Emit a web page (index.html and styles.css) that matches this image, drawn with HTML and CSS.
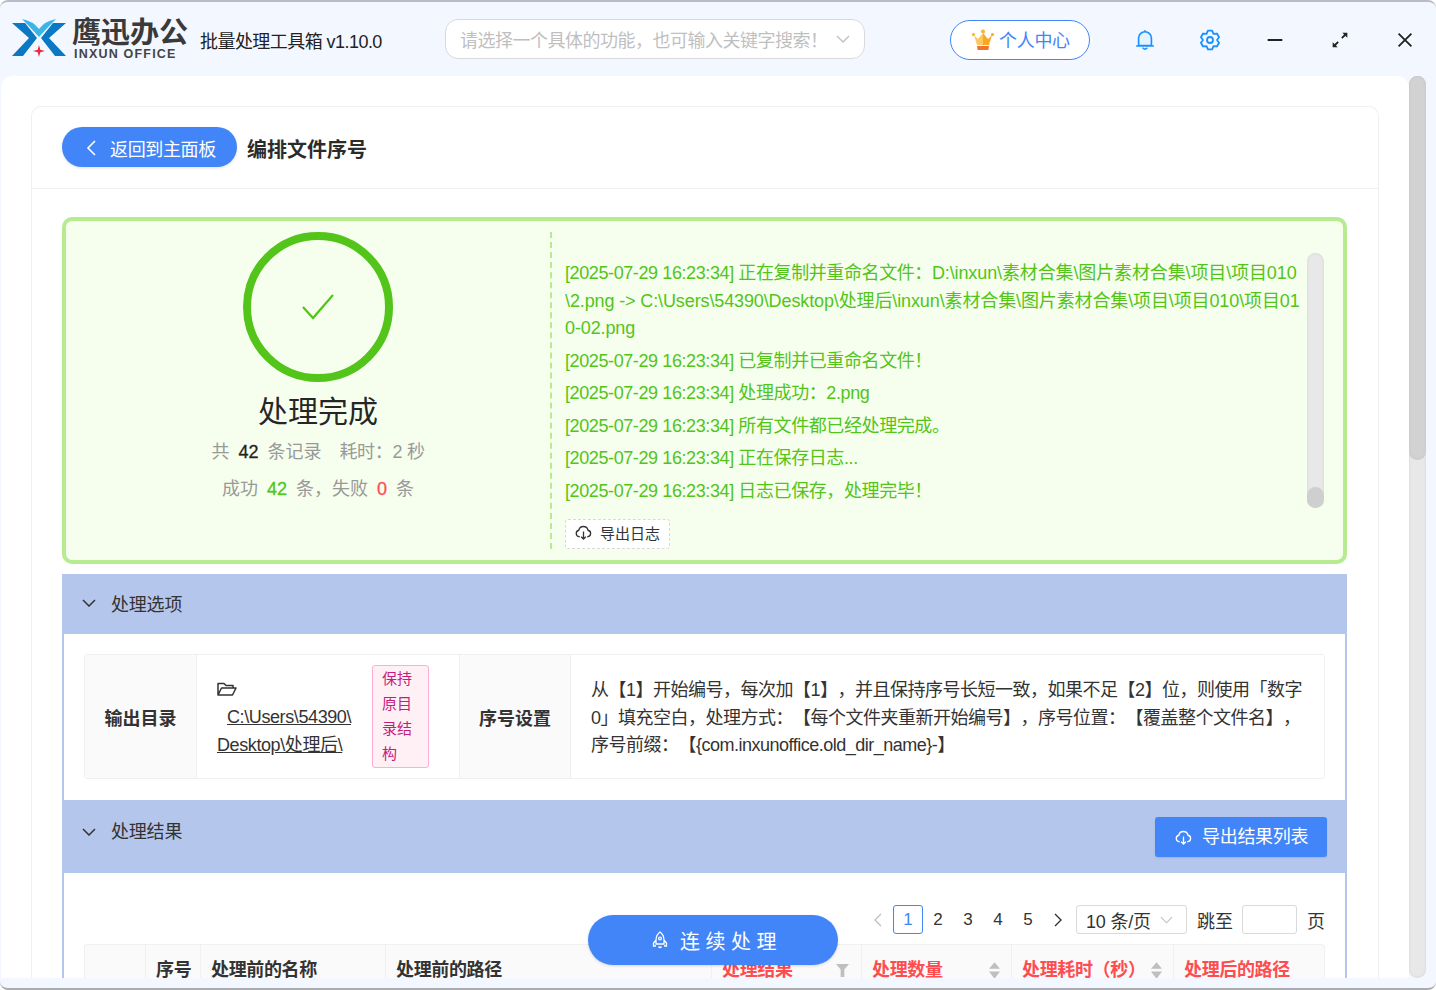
FILE: index.html
```html
<!DOCTYPE html>
<html lang="zh-CN">
<head>
<meta charset="utf-8">
<title>批量处理工具箱</title>
<link rel="stylesheet" href="styles.css">
</head>
<body>
<div class="app">
  <header class="topbar">
    <div class="logo">
      <svg class="logo-mark" viewBox="12 19 55 39">
        <path fill="#0a78c2" d="M12 24H25L37 39 23 57H12L29 39Z"/>
        <path fill="#0a78c2" d="M66 24H53L41 39 55 57H66L49 39Z"/>
        <path fill="#3cb4e8" d="M22 20Q33 22 39 30 45 22 56 20 47 29 39 38 31 29 22 20Z"/>
        <path fill="#ee2b3b" d="M39 46L40.3 50.7 45 52 40.3 53.3 39 58 37.7 53.3 33 52 37.7 50.7Z"/>
      </svg>
      <div class="logo-text">
        <div class="logo-cn">鹰迅办公</div>
        <div class="logo-en">INXUN OFFICE</div>
      </div>
    </div>
    <div class="app-title">批量处理工具箱 v1.10.0</div>
    <div class="search">
      <span class="search-text">请选择一个具体的功能，也可输入关键字搜索！</span>
      <svg class="search-arrow" viewBox="0 0 14 8"><path d="M1 1L7 7 13 1"/></svg>
    </div>
    <div class="user-btn">
      <svg class="crown" viewBox="971 31 24 22">
        <circle cx="983" cy="33.5" r="2" fill="#f9b233"/>
        <circle cx="973.5" cy="36.5" r="1.6" fill="#f9b233"/>
        <circle cx="992.5" cy="36.5" r="1.6" fill="#f9a825"/>
        <path fill="#fdc860" d="M974 37L977 47H983V35L978 41Z"/>
        <path fill="#f9a825" d="M992 37L989 47H983V35L988 41Z"/>
        <path fill="#f2742c" d="M977 48H989L988.4 52H977.6Z"/>
      </svg>
      <span class="user-name">个人中心</span>
    </div>
    <div class="win-icons">
      <svg class="win-icon" viewBox="0 0 20 24"><path class="bell" d="M3 18V10A7 7 0 0 1 17 10V18ZM1 18.500H19M8 21Q10 23 12 21M10 2V3"/></svg>
      <svg class="win-icon" viewBox="-11 -11 22 22"><path class="gear" d="M-2.100-9.300L2.100-9.300 3.500-6.060 6.950-6.480 9.080-2.780 7 0 9.080 2.780 6.950 6.480 3.500 6.060 2.100 9.300-2.100 9.300-3.500 6.060-6.950 6.480-9.080 2.780-7 0-9.080-2.780-6.950-6.480-3.500-6.060Z"/><circle class="gear" r="3"/></svg>
      <svg class="win-icon" viewBox="0 0 24 24"><path class="win-line" d="M4 12H20"/></svg>
      <svg class="win-icon" viewBox="0 0 24 24"><path class="win-line" d="M14 10L18 6M10 14L6 18"/><path class="win-fill" d="M14.500 4H20V9.500ZM9.500 20H4V14.500Z"/></svg>
      <svg class="win-icon" viewBox="0 0 24 24"><path class="win-line" d="M5 5L19 19M19 5L5 19"/></svg>
    </div>
  </header>

  <div class="workspace">
    <main class="panel">
      <section class="card">
        <div class="card-head">
          <div class="back-btn">
            <svg class="back-arrow" viewBox="0 0 10 16"><path d="M9 1L2 8 9 15"/></svg>
            <span>返回到主面板</span>
          </div>
          <h1 class="page-title">编排文件序号</h1>
        </div>
        <div class="card-body">
          <div class="result-box">
            <div class="summary">
              <div class="ring">
                <svg class="tick" viewBox="0 0 32 26"><path d="M1 13L11 24 31 1"/></svg>
              </div>
              <div class="done">处理完成</div>
              <div class="stat stat-a">共<b class="num">42</b>条记录<span class="stat-gap">耗时：2 秒</span></div>
              <div class="stat">成功<b class="num ok">42</b>条，失败<b class="num bad">0</b>条</div>
            </div>
            <div class="log-side">
              <div class="log-row">
                <div class="log">
                  <p>[2025-07-29 16:23:34] 正在复制并重命名文件：<span class="log-path">D:\inxun\素材合集\图片素材合集\项目\项目010<br>\2.png -&gt; C:\Users\54390\Desktop\处理后\inxun\素材合集\图片素材合集\项目\项目010\项目01<br>0-02.png</span></p>
                  <p>[2025-07-29 16:23:34] 已复制并已重命名文件！</p>
                  <p>[2025-07-29 16:23:34] 处理成功：2.png</p>
                  <p>[2025-07-29 16:23:34] 所有文件都已经处理完成。</p>
                  <p>[2025-07-29 16:23:34] 正在保存日志...</p>
                  <p>[2025-07-29 16:23:34] 日志已保存，处理完毕！</p>
                </div>
                <div class="log-track"><div class="log-thumb"></div></div>
              </div>
              <div class="log-export">
                <svg class="cloud" viewBox="0 0 18 16"><path d="M5 12.500H4.500A3.500 3.500 0 0 1 4 5.600 5 5 0 0 1 13.800 5.600 3.500 3.500 0 0 1 13.500 12.500H13M9 7V15M6.500 12.500L9 15 11.500 12.500"/></svg>
                <span>导出日志</span>
              </div>
            </div>
          </div>

          <div class="fold-head">
            <svg class="fold-arrow" viewBox="0 0 14 8"><path d="M1 1L7 7 13 1"/></svg>
            <span>处理选项</span>
          </div>
          <div class="fold-body options">
            <div class="opt-table">
              <div class="opt-label">输出目录</div>
              <div class="opt-path">
                <div class="path-text">
                  <svg class="folder" viewBox="0 0 20 14"><path d="M1 13V1.500H7L9 3.500H16V6M1 13L4.500 6H19L15.500 13Z"/></svg>
                  <div class="path-link"><a>C:\Users\54390\<br>Desktop\处理后\</a></div>
                </div>
                <div class="tag">保持原目录结构</div>
              </div>
              <div class="opt-label">序号设置</div>
              <div class="opt-desc">从【1】开始编号，每次加【1】，并且保持序号长短一致，如果不足【2】位，则使用「数字<br>0」填充空白，处理方式：【每个文件夹重新开始编号】，序号位置：【覆盖整个文件名】，<br>序号前缀：【{com.inxunoffice.old_dir_name}-】</div>
            </div>
          </div>

          <div class="fold-head tall">
            <svg class="fold-arrow" viewBox="0 0 14 8"><path d="M1 1L7 7 13 1"/></svg>
            <span>处理结果</span>
            <div class="export-btn">
              <svg class="cloud white" viewBox="0 0 18 16"><path d="M5 12.500H4.500A3.500 3.500 0 0 1 4 5.600 5 5 0 0 1 13.800 5.600 3.500 3.500 0 0 1 13.500 12.500H13M9 7V15M6.500 12.500L9 15 11.500 12.500"/></svg>
              <span>导出结果列表</span>
            </div>
          </div>
          <div class="fold-body results">
            <div class="pager">
              <svg class="pg-arrow muted" viewBox="0 0 8 14"><path d="M7 1L1 7 7 13"/></svg>
              <span class="pg-item current">1</span>
              <span class="pg-item">2</span>
              <span class="pg-item">3</span>
              <span class="pg-item">4</span>
              <span class="pg-item">5</span>
              <svg class="pg-arrow" viewBox="0 0 8 14"><path d="M1 1L7 7 1 13"/></svg>
              <div class="pg-size"><span>10 条/页</span><svg class="pg-drop" viewBox="0 0 14 8"><path d="M1 1L7 7 13 1"/></svg></div>
              <span class="pg-jump">跳至</span>
              <span class="pg-input"></span>
              <span class="pg-unit">页</span>
            </div>
            <div class="thead">
              <div class="th c-check"></div>
              <div class="th c-no">序号</div>
              <div class="th c-name">处理前的名称</div>
              <div class="th c-path">处理前的路径</div>
              <div class="th c-res red">处理结果<svg class="filter" viewBox="0 0 14 14"><path d="M0 0H14L9 6V14H5V6Z"/></svg></div>
              <div class="th c-count red">处理数量<svg class="sorter" viewBox="0 0 12 18"><path d="M6 0L12 7H0ZM6 18L0 10H12Z"/></svg></div>
              <div class="th c-time red">处理耗时（秒）<svg class="sorter" viewBox="0 0 12 18"><path d="M6 0L12 7H0ZM6 18L0 10H12Z"/></svg></div>
              <div class="th c-after red">处理后的路径</div>
            </div>
          </div>
        </div>
      </section>
    </main>
    <div class="page-track"><div class="page-thumb"></div></div>
  </div>

  <div class="run-btn">
    <svg class="rocket" viewBox="0 0 16 18"><path d="M8 1Q12 4 12 9V13H4V9Q4 4 8 1ZM4 9L1.500 12V15H4M12 9L14.500 12V15H12M6.500 15.500Q8 17.500 9.500 15.500"/><circle cx="8" cy="7.500" r="1.400"/></svg>
    <span>连续处理</span>
  </div>
</div>
</body>
</html>
```

FILE: styles.css
```css
* { box-sizing: border-box; }
html, body { margin: 0; height: 100%; background: #fff; overflow: hidden; }
body {
  font-family: "Liberation Sans", "Noto Sans CJK SC", sans-serif;
  font-size: 18px;
  color: #333;
  text-spacing-trim: space-all;
}
svg { display: block; flex: none; }

.app {
  position: relative;
  height: 990px;
  background: #f3f7ff;
  border-top: 2px solid #b9bcc6;
  border-bottom: 2px solid #a9abaf;
  border-radius: 8px;
  overflow: hidden;
}

/* top bar */
.topbar { height: 74px; display: flex; align-items: center; padding: 2px 0 0 12px; }
.logo { width: 188px; display: flex; align-items: flex-start; margin-top: -2px; }
.logo-mark { width: 55px; height: 39px; }
.logo-text { margin-left: 5px; margin-top: 1px; }
.logo-cn { font-size: 29px; line-height: 29px; font-weight: 700; color: #3a3a3a; letter-spacing: 0; white-space: nowrap; }
.logo-en { font-size: 12.500px; line-height: 13px; font-weight: 700; color: #444; letter-spacing: 1.200px; margin-left: 2px; white-space: nowrap; }
.app-title { width: 245px; font-size: 18px; color: #222; letter-spacing: -.55px; white-space: nowrap; }
.search {
  width: 420px; height: 40px; margin-top: -2px; background: #fff; border: 1px solid #d9d9d9; border-radius: 13px;
  display: flex; align-items: center; padding: 0 14px; justify-content: space-between;
}
.search-text { color: #bfbfbf; letter-spacing: -.5px; white-space: nowrap; }
.search-arrow { width: 14px; height: 8px; }
.search-arrow path { fill: none; stroke: #bfbfbf; stroke-width: 1.300; }
.user-btn {
  margin-left: 85px; width: 140px; height: 40px; border: 1px solid #4285f8; border-radius: 20px; background: #fff;
  display: flex; align-items: center; padding-left: 20px; color: #4285f8; letter-spacing: -.3px; white-space: nowrap;
}
.user-name { margin: -2px 0 0 -1px; }
.crown { width: 24px; height: 22px; margin-right: 5px; }
.win-icons { margin-left: 44px; display: flex; align-items: center; }
.win-icon { width: 22px; height: 22px; margin-right: 43px; }
.win-icons .win-icon:last-child { margin-right: 0; }
.bell { fill: #e6f3ff; stroke: #1890ff; stroke-width: 1.800; stroke-linejoin: round; stroke-linecap: round; }
.gear { fill: none; stroke: #1890ff; stroke-width: 1.800; stroke-linejoin: round; }
.win-line { fill: none; stroke: #222; stroke-width: 2; }
.win-fill { fill: #222; }

/* workspace */
.workspace { height: 902px; display: flex; padding-left: 1px; }
.panel { width: 1408px; height: 902px; background: #fff; border-radius: 12px 12px 0 0; padding: 30px 0 0 30px; overflow: hidden; }
.page-track { width: 17px; height: 902px; background: #e8e8e8; border-radius: 9px; box-shadow: inset 0 0 3px #d2d2d2; }
.page-thumb { height: 384px; background: #d2d2d2; border-radius: 9px; box-shadow: inset 0 0 3px #c4c4c4; }

.card { width: 1348px; border: 1px solid #f0f0f0; border-bottom: 0; border-radius: 10px 10px 0 0; }
.card-head { height: 82px; padding: 20px 30px 0; display: flex; border-bottom: 1px solid #f0f0f0; }
.back-btn {
  width: 175px; height: 40px; background: #4285f8; border-radius: 20px; color: #fff; box-shadow: 0 1px 3px rgba(0,0,0,.12);
  display: flex; align-items: center; padding: 2px 0 0 24px; letter-spacing: -.35px; white-space: nowrap;
}
.back-arrow { width: 10px; height: 16px; margin-right: 14px; }
.back-arrow path { fill: none; stroke: #fff; stroke-width: 1.600; }
.page-title { margin: 0 0 0 10px; font-size: 20px; line-height: 46px; font-weight: 700; color: #2b2b2b; }
.card-body { padding: 28px 31px 0 30px; }

/* result box */
.result-box {
  height: 347px; background: #f6ffed; border: 4px solid #b7eb8f; border-radius: 10px; display: flex;
}
.summary { width: 486px; padding: 0 0 0 20px; border-right: 2px dashed #b7eb8f; margin: 11px 0; display: flex; flex-direction: column; align-items: center; }
.ring { width: 150px; height: 150px; border: 8px solid #52c41a; border-radius: 50%; display: flex; align-items: center; justify-content: center; flex: none; }
.tick { width: 32px; height: 26px; }
.tick path { fill: none; stroke: #52c41a; stroke-width: 2.200; }
.done { margin-top: 10px; font-size: 30px; line-height: 40px; color: #262626; letter-spacing: 0; }
.stat { color: #999; line-height: 37px; letter-spacing: 0; white-space: nowrap; }
.stat-a { margin-top: 2px; }
.stat-gap { margin-left: 18px; letter-spacing: -.3px; }
.num { font-weight: 400; color: #222; margin: 0 9px; -webkit-text-stroke: .3px; }
.num.ok { color: #52c41a; }
.num.bad { color: #ff4d4f; }

.log-side { flex: 1; min-width: 0; padding-left: 13px; padding-top: 32px; display: flex; flex-direction: column; }
.log-row { height: 255px; display: flex; }
.log { width: 737px; padding-top: 7px; margin-right: 5px; color: #52c41a; letter-spacing: -.4px; overflow: hidden; white-space: nowrap; }
.log p { margin: 0 0 5px; line-height: 27.500px; }
.log-path { letter-spacing: -.12px; }
.log-track { width: 17px; height: 255px; background: #e8e8e8; border-radius: 9px; box-shadow: inset 0 0 3px #d2d2d2; display: flex; flex-direction: column; justify-content: flex-end; }
.log-thumb { height: 21px; background: #cfcfcf; border-radius: 9px; }
.log-export {
  margin-top: 11px; width: 105px; height: 30px; background: #fff; border: 1px dashed #d9d9d9; border-radius: 3px;
  display: flex; align-items: center; padding: 0 0 4px 9px; font-size: 15px; color: #333;
}
.cloud { width: 17px; height: 15px; margin-right: 8px; }
.cloud path { fill: none; stroke: #333; stroke-width: 1.400; }
.cloud.white path { stroke: #fff; }

/* folds */
.fold-head { margin-top: 10px; height: 60px; background: #b5c6ec; padding: 0 0 2px 20px; display: flex; align-items: center; letter-spacing: -.2px; color: #333; }
.fold-head.tall { margin-top: 0; height: 73px; align-items: flex-start; padding: 18px 0 0 20px; position: relative; line-height: 28px; }
.fold-arrow { width: 14px; height: 8px; margin-right: 15px; }
.tall .fold-arrow { margin-top: 10px; }
.fold-arrow path { fill: none; stroke: #333; stroke-width: 1.500; }
.export-btn {
  margin-left: auto; margin-right: 20px; margin-top: -1px; width: 172px; height: 40px; background: #4285f8; border-radius: 3px; color: #fff;
  display: flex; align-items: center; padding-left: 20px; letter-spacing: -.3px; white-space: nowrap; box-shadow: 0 1px 2px rgba(0,0,0,.1);
}
.export-btn .cloud { margin-right: 10px; }
.fold-body { border: 0 solid #b5c6ec; border-width: 0 2px; background: #fff; padding: 20px 20px 21px; }
.opt-table {
  display: grid; grid-template-columns: 112px 262px 112px 1fr; min-height: 125px;
  border: 1px solid #f0f0f0; border-radius: 3px; align-items: stretch;
}
.opt-label { background: #fafafa; font-weight: 700; color: #333; display: flex; align-items: center; justify-content: center; border-right: 1px solid #f0f0f0; border-left: 1px solid #f0f0f0; }
.opt-table .opt-label:first-child { border-left: 0; }
.opt-path { padding: 10px 30px 10px 20px; display: flex; align-items: center; }
.path-text { width: 135px; line-height: 28px; letter-spacing: -.4px; white-space: nowrap; color: #333; }
.folder { width: 20px; height: 14px; margin-bottom: 7px; margin-top: 7px; }
.folder path { fill: none; stroke: #333; stroke-width: 1.500; stroke-linejoin: round; }
.path-link a { text-decoration: underline; }
.path-link { text-indent: 10px; }
.tag { margin-left: 20px; width: 57px; padding: 0 8px 1px 9px; background: #fff0f6; border: 1px solid #ffadd2; border-radius: 3px; color: #c41d7f; font-size: 15px; line-height: 25px; flex: none; word-break: break-all; }
.opt-desc { padding: 22px 0 0 20px; line-height: 27.500px; letter-spacing: -.5px; white-space: nowrap; color: #333; overflow: hidden; }

/* results */
.results { padding: 32px 20px 0; }
.pager { height: 29px; display: flex; align-items: center; justify-content: flex-end; color: #333; font-size: 17px; }
.pg-arrow { width: 8px; height: 14px; margin: 0 11px; }
.pg-arrow path { fill: none; stroke: #333; stroke-width: 1.400; }
.pg-arrow.muted path { stroke: #bfbfbf; }
.pg-item { width: 30px; text-align: center; }
.pg-item.current { height: 29px; line-height: 27px; border: 1px solid #4285f8; border-radius: 3px; color: #4285f8; }
.pg-size { margin-left: 3px; width: 111px; height: 29px; border: 1px solid #d9d9d9; border-radius: 3px; display: flex; align-items: center; justify-content: space-between; padding: 0 13px 0 9px; font-size: 18px; letter-spacing: -.2px; white-space: nowrap; }
.pg-drop { width: 13px; height: 8px; }
.pg-drop path { fill: none; stroke: #bfbfbf; stroke-width: 1.200; }
.pg-jump { margin-left: 10px; font-size: 18px; }
.pg-input { margin-left: 9px; width: 55px; height: 29px; border: 1px solid #d9d9d9; border-radius: 3px; }
.pg-unit { margin-left: 10px; font-size: 18px; }
.thead { margin-top: 10px; height: 60px; display: flex; background: #fafafa; border: 1px solid #f0f0f0; border-radius: 3px 3px 0 0; }
.th { border-right: 1px solid #f0f0f0; padding: 11px 0 0 10px; font-weight: 700; line-height: 28px; letter-spacing: -.35px; display: flex; align-items: flex-start; justify-content: space-between; white-space: nowrap; color: #333; }
.th:last-child { border-right: 0; }
.th.red { color: #ff4d4f; }
.c-check { width: 61px; }
.c-no { width: 55px; }
.c-name { width: 185px; }
.c-path { width: 326px; }
.c-res { width: 150px; padding-right: 12px; }
.c-count { width: 150px; padding-right: 11px; }
.c-time { width: 162px; padding-right: 11px; }
.c-after { flex: 1; }
.filter { width: 13px; height: 13px; margin-top: 8px; }
.filter path { fill: #bfbfbf; }
.sorter { width: 11px; height: 17px; margin-top: 6px; }
.sorter path { fill: #bfbfbf; }

/* floating action */
.run-btn {
  position: absolute; left: 588px; top: 913px; width: 250px; height: 50px; background: #4285f8; border-radius: 25px; color: #fff;
  display: flex; align-items: center; padding-left: 64px; font-size: 20px; letter-spacing: 5.500px; white-space: nowrap; box-shadow: 0 1px 3px rgba(0,0,0,.15);
}
.rocket { width: 16px; height: 18px; margin-right: 12px; }
.rocket path, .rocket circle { fill: none; stroke: #fff; stroke-width: 1.300; }
```
